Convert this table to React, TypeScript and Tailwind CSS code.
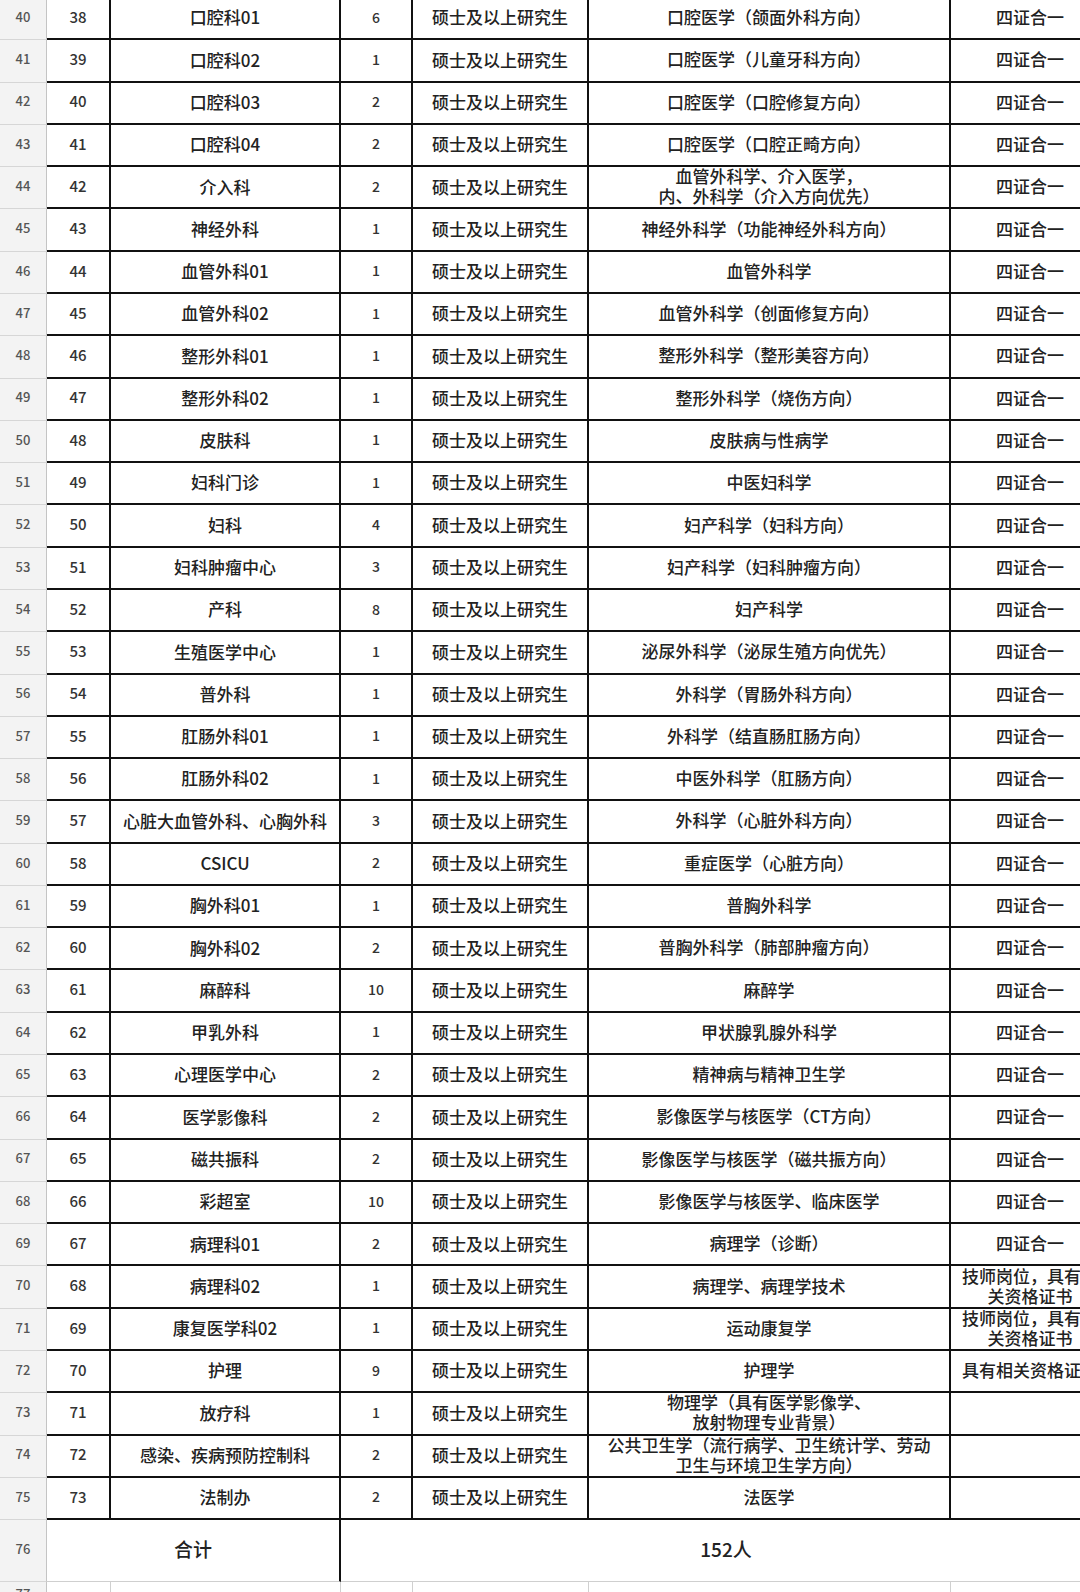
import React from "react";

type Row = {
  n: number;
  no: string;
  dept: string;
  cnt: string;
  deg: string;
  spec: string[];
  note: string[];
};

const S = "四证合一";
const D = "硕士及以上研究生";

const raw: [string, string, string, string[], string[]][] = [
  ["38", "口腔科01", "6", ["口腔医学（颌面外科方向）"], [S]],
  ["39", "口腔科02", "1", ["口腔医学（儿童牙科方向）"], [S]],
  ["40", "口腔科03", "2", ["口腔医学（口腔修复方向）"], [S]],
  ["41", "口腔科04", "2", ["口腔医学（口腔正畸方向）"], [S]],
  ["42", "介入科", "2", ["血管外科学、介入医学，", "内、外科学（介入方向优先）"], [S]],
  ["43", "神经外科", "1", ["神经外科学（功能神经外科方向）"], [S]],
  ["44", "血管外科01", "1", ["血管外科学"], [S]],
  ["45", "血管外科02", "1", ["血管外科学（创面修复方向）"], [S]],
  ["46", "整形外科01", "1", ["整形外科学（整形美容方向）"], [S]],
  ["47", "整形外科02", "1", ["整形外科学（烧伤方向）"], [S]],
  ["48", "皮肤科", "1", ["皮肤病与性病学"], [S]],
  ["49", "妇科门诊", "1", ["中医妇科学"], [S]],
  ["50", "妇科", "4", ["妇产科学（妇科方向）"], [S]],
  ["51", "妇科肿瘤中心", "3", ["妇产科学（妇科肿瘤方向）"], [S]],
  ["52", "产科", "8", ["妇产科学"], [S]],
  ["53", "生殖医学中心", "1", ["泌尿外科学（泌尿生殖方向优先）"], [S]],
  ["54", "普外科", "1", ["外科学（胃肠外科方向）"], [S]],
  ["55", "肛肠外科01", "1", ["外科学（结直肠肛肠方向）"], [S]],
  ["56", "肛肠外科02", "1", ["中医外科学（肛肠方向）"], [S]],
  ["57", "心脏大血管外科、心胸外科", "3", ["外科学（心脏外科方向）"], [S]],
  ["58", "CSICU", "2", ["重症医学（心脏方向）"], [S]],
  ["59", "胸外科01", "1", ["普胸外科学"], [S]],
  ["60", "胸外科02", "2", ["普胸外科学（肺部肿瘤方向）"], [S]],
  ["61", "麻醉科", "10", ["麻醉学"], [S]],
  ["62", "甲乳外科", "1", ["甲状腺乳腺外科学"], [S]],
  ["63", "心理医学中心", "2", ["精神病与精神卫生学"], [S]],
  ["64", "医学影像科", "2", ["影像医学与核医学（CT方向）"], [S]],
  ["65", "磁共振科", "2", ["影像医学与核医学（磁共振方向）"], [S]],
  ["66", "彩超室", "10", ["影像医学与核医学、临床医学"], [S]],
  ["67", "病理科01", "2", ["病理学（诊断）"], [S]],
  ["68", "病理科02", "1", ["病理学、病理学技术"], ["技师岗位，具有相", "关资格证书"]],
  ["69", "康复医学科02", "1", ["运动康复学"], ["技师岗位，具有相", "关资格证书"]],
  ["70", "护理", "9", ["护理学"], ["具有相关资格证书"]],
  ["71", "放疗科", "1", ["物理学（具有医学影像学、", "放射物理专业背景）"], []],
  ["72", "感染、疾病预防控制科", "2", ["公共卫生学（流行病学、卫生统计学、劳动", "卫生与环境卫生学方向）"], []],
  ["73", "法制办", "2", ["法医学"], []],
];

const rows: Row[] = raw.map((r, i) => ({
  n: 40 + i,
  no: r[0],
  dept: r[1],
  cnt: r[2],
  deg: D,
  spec: r[3],
  note: r[4],
}));

const font = "font-['Noto_Sans_CJK_SC','Noto_Sans',sans-serif]";

function Lines({ lines }: { lines: string[] }) {
  return (
    <div className="flex flex-col items-center leading-[20px] whitespace-nowrap">
      {lines.map((l, i) => (
        <span key={i}>{l}</span>
      ))}
    </div>
  );
}

function DataRow({ r }: { r: Row }) {
  const cell =
    "shrink-0 h-full flex items-center justify-center border-b-2 border-r-2 border-[#111] pb-[2px] overflow-visible";
  return (
    <div className="flex h-[42.29px]">
      <div className="w-[47px] shrink-0 h-full flex items-center justify-center bg-[#f3f3f3] border-b border-r border-b-[#d6d6d6] border-r-[#c4c4c4] pb-[4px] text-[13px] text-[#555]">
        {r.n}
      </div>
      <div className={`${cell} w-[64px] text-[15px] text-[#333]`}>{r.no}</div>
      <div className={`${cell} w-[230px] text-[17px] text-[#222] whitespace-nowrap`}>{r.dept}</div>
      <div className={`${cell} w-[72px] text-[14px] text-[#333]`}>{r.cnt}</div>
      <div className={`${cell} w-[176px] text-[17px] text-[#222]`}>{r.deg}</div>
      <div className={`${cell} w-[362px] text-[17px] text-[#222]`}>
        <Lines lines={r.spec} />
      </div>
      <div className={`${cell} w-[160px] text-[17px] text-[#222]`}>
        <Lines lines={r.note} />
      </div>
    </div>
  );
}

export default function App() {
  return (
    <div className={`w-[1080px] h-[1592px] overflow-hidden bg-white font-medium ${font}`}>
      <div className="-mt-[2px] w-[1111px]">
        {rows.map((r) => (
          <DataRow key={r.n} r={r} />
        ))}
        {/* total row */}
        <div className="flex h-[62px]">
          <div className="w-[47px] shrink-0 h-full flex items-center justify-center bg-[#f3f3f3] border-b border-r border-b-[#d6d6d6] border-r-[#c4c4c4] pb-[4px] text-[13px] text-[#555]">
            76
          </div>
          <div className="w-[294px] shrink-0 h-full flex items-center justify-center border-r-2 border-r-[#111] border-b border-b-[#cfcfcf] pb-[2px] text-[19px] text-[#222]">
            合计
          </div>
          <div className="w-[770px] shrink-0 h-full flex items-center justify-center border-b border-b-[#cfcfcf] pb-[2px] text-[19px] text-[#222]">
            152人
          </div>
        </div>
        {/* row 77, partly visible */}
        <div className="flex h-[42px]">
          <div className="w-[47px] shrink-0 h-full flex items-start justify-center bg-[#f3f3f3] border-r border-r-[#c4c4c4] pt-[2px] text-[13px] text-[#555]">
            77
          </div>
          <div className="w-[64px] shrink-0 h-full border-r border-[#d0d0d0]" />
          <div className="w-[230px] shrink-0 h-full border-r border-[#d0d0d0]" />
          <div className="w-[72px] shrink-0 h-full border-r border-[#d0d0d0]" />
          <div className="w-[176px] shrink-0 h-full border-r border-[#d0d0d0]" />
          <div className="w-[362px] shrink-0 h-full border-r border-[#d0d0d0]" />
          <div className="w-[160px] shrink-0 h-full border-r border-[#d0d0d0]" />
        </div>
      </div>
    </div>
  );
}
